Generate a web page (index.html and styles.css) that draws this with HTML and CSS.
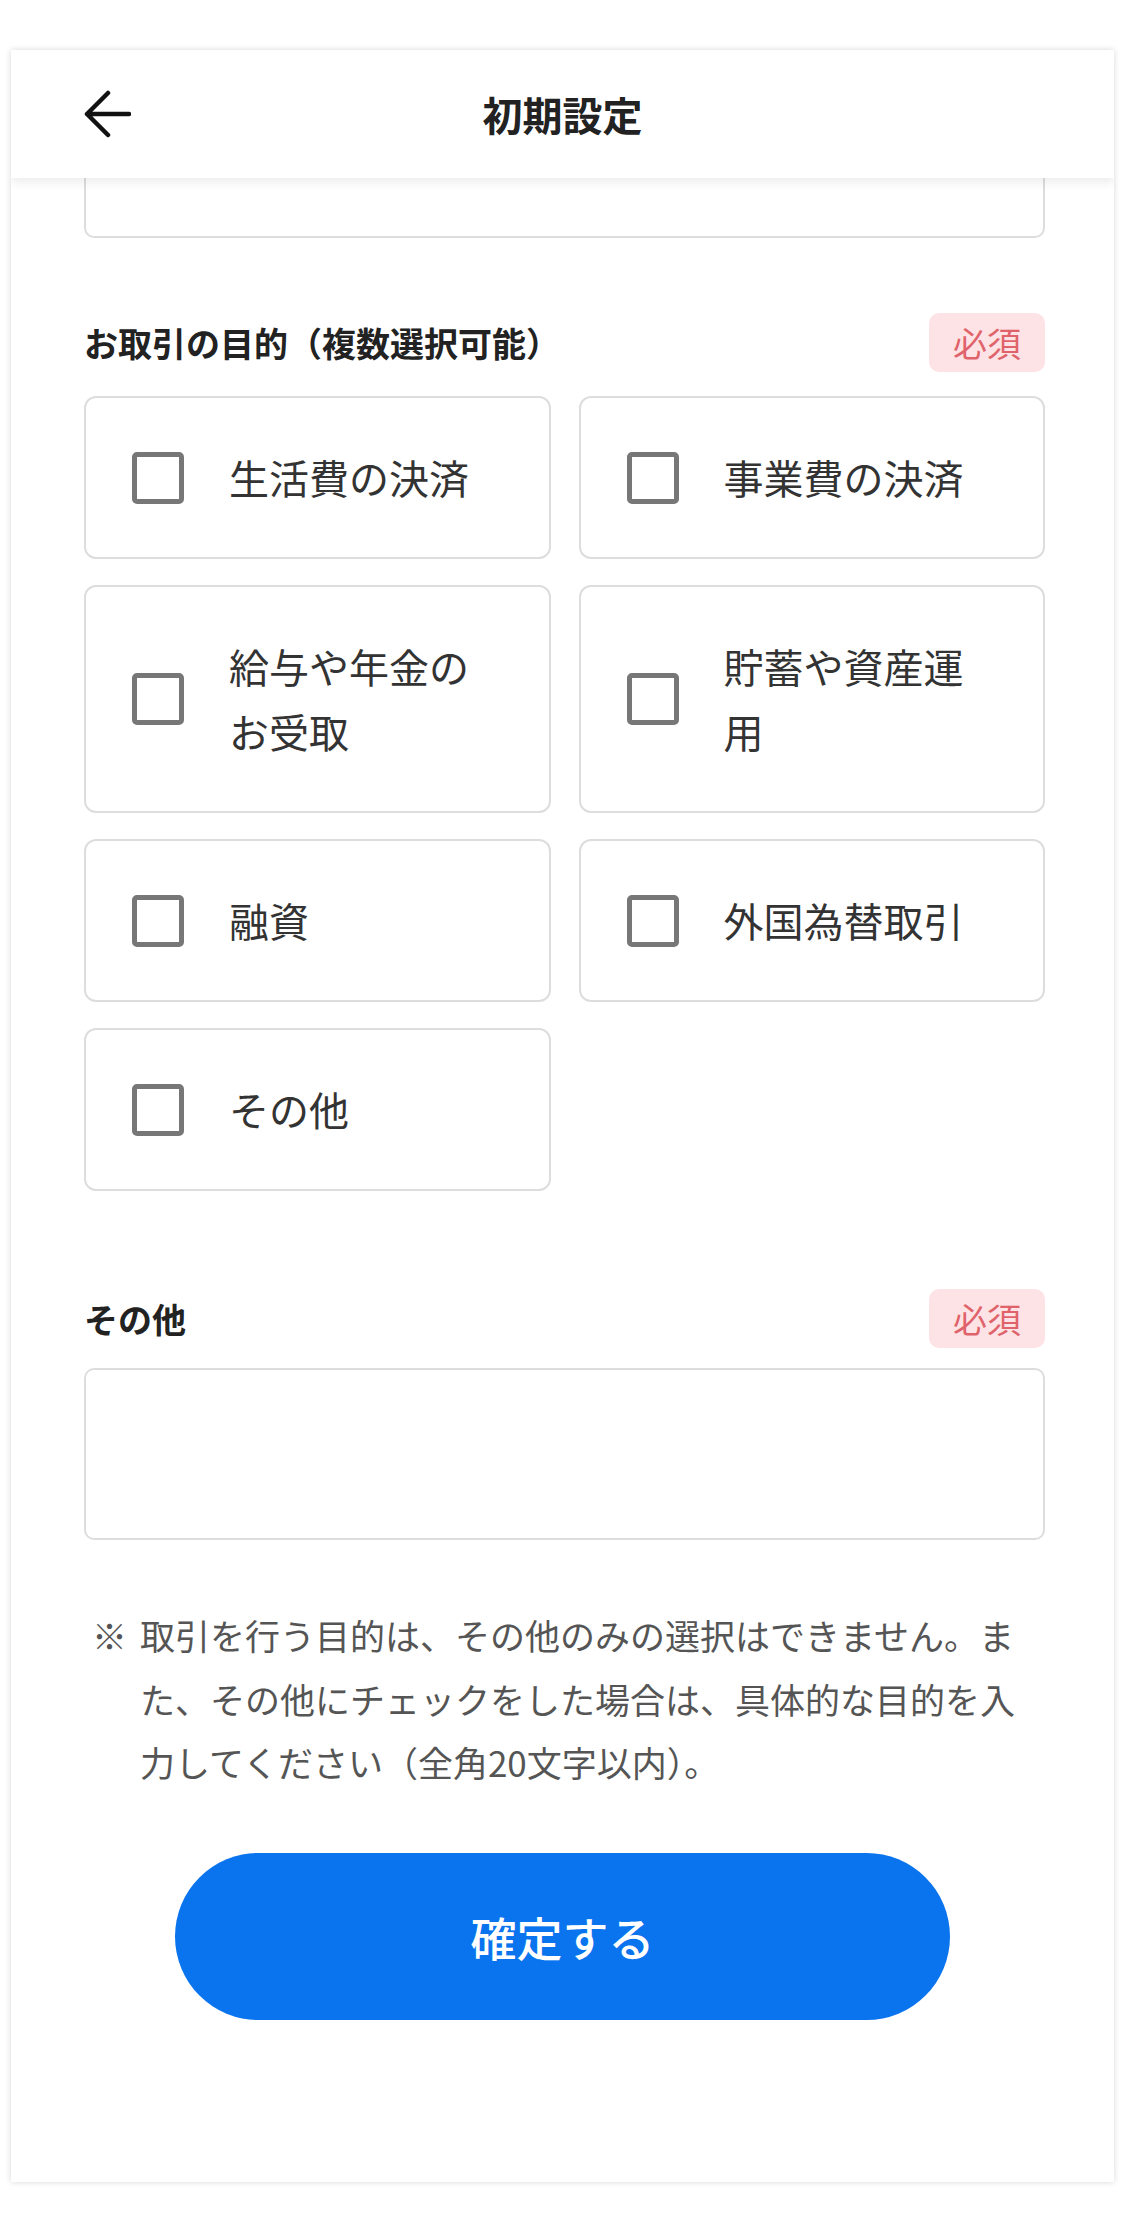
FILE: index.html
```html
<!DOCTYPE html>
<html lang="ja">
<head>
<meta charset="utf-8">
<title>初期設定</title>
<link rel="stylesheet" href="styles.css">
</head>
<body>
<div class="page">
  <div class="screen">
    <header class="topbar">
      <div class="back">
        <svg class="back-icon" viewBox="0 0 48 48" width="48" height="48" aria-hidden="true">
          <path d="M4 24 H46 M25 3 L4 24 L25 45" fill="none" stroke="#111" stroke-width="4.5" stroke-linecap="round" stroke-linejoin="round"/>
        </svg>
      </div>
      <h1 class="title">初期設定</h1>
      <div class="spacer"></div>
    </header>
    <main class="content">
      <div class="field field-cut"></div>

      <div class="label-row label-row-first">
        <span class="label">お取引の目的（複数選択可能）</span>
        <span class="badge">必須</span>
      </div>

      <div class="options">
        <label class="option"><span class="box"></span><span class="opt-text">生活費の決済</span></label>
        <label class="option"><span class="box"></span><span class="opt-text">事業費の決済</span></label>
        <label class="option"><span class="box"></span><span class="opt-text">給与や年金のお受取</span></label>
        <label class="option"><span class="box"></span><span class="opt-text">貯蓄や資産運用</span></label>
        <label class="option"><span class="box"></span><span class="opt-text">融資</span></label>
        <label class="option"><span class="box"></span><span class="opt-text">外国為替取引</span></label>
        <label class="option"><span class="box"></span><span class="opt-text">その他</span></label>
      </div>

      <div class="label-row label-row-second">
        <span class="label">その他</span>
        <span class="badge">必須</span>
      </div>
      <div class="field field-other"></div>

      <div class="note">
        <span class="mark">※</span>
        <span class="note-text">取引を行う目的は、その他のみの選択はできません。また、その他にチェックをした場合は、具体的な目的を入力してください（全角20文字以内）。</span>
      </div>

      <div class="actions">
        <button class="submit" type="button">確定する</button>
      </div>
    </main>
  </div>
</div>
</body>
</html>
```

FILE: styles.css
```css
* {
  box-sizing: border-box;
}

html, body {
  margin: 0;
  padding: 0;
  background: #ffffff;
}

body {
  font-family: "Noto Sans CJK JP", "Noto Sans", sans-serif;
  color: #333333;
}

.page {
  width: 1125px;
  height: 2230px;
  padding: 50px 11px 48px 11px;
}

.screen {
  width: 1103px;
  height: 2132px;
  background: #ffffff;
  box-shadow: 0 0 6px rgba(0, 0, 0, 0.16);
  display: flex;
  flex-direction: column;
  overflow: hidden;
}

.topbar {
  position: relative;
  z-index: 2;
  flex: none;
  height: 128px;
  background: #ffffff;
  display: grid;
  grid-template-columns: 1fr auto 1fr;
  align-items: center;
  padding: 0 0 0 72px;
  box-shadow: 0 5px 9px rgba(0, 0, 0, 0.07);
}

.back {
  display: flex;
  align-items: center;
}

.back-icon {
  display: block;
  width: 48px;
  height: 48px;
}

.title {
  margin: 0;
  font-size: 40px;
  font-weight: 700;
  color: #222222;
  line-height: 1;
  letter-spacing: 0;
  transform: translateX(-36px);
}

.content {
  flex: 1;
  overflow: hidden;
  padding: 0 69px 0 73px;
}

.field {
  border: 2px solid #dddddd;
  border-radius: 10px;
  background: #ffffff;
  height: 172px;
}

.field-cut {
  margin-top: -112px;
}

.label-row {
  display: flex;
  justify-content: space-between;
  align-items: center;
  height: 59px;
}

.label-row-first {
  margin-top: 75px;
}

.label-row-second {
  margin-top: 98px;
}

.label {
  font-size: 34px;
  font-weight: 700;
  color: #222222;
  line-height: 1;
}

.badge {
  display: inline-block;
  height: 59px;
  line-height: 59px;
  padding: 0 24px;
  font-size: 34px;
  color: #e0636b;
  background: #fde3e5;
  border-radius: 10px;
}

.options {
  margin-top: 24px;
  display: grid;
  grid-template-columns: 1fr 1fr;
  column-gap: 28px;
  row-gap: 26px;
}

.option {
  display: flex;
  align-items: center;
  padding: 47px 46px;
  border: 2px solid #dddddd;
  border-radius: 12px;
  background: #ffffff;
}

.box {
  flex: none;
  width: 52px;
  height: 52px;
  border: 5px solid #777777;
  border-radius: 5px;
  margin-right: 45px;
  background: #ffffff;
}

.opt-text {
  font-size: 40px;
  line-height: 65px;
  color: #333333;
}

.field-other {
  margin-top: 20px;
}

.note {
  margin-top: 63px;
  display: flex;
  padding-left: 8px;
  font-size: 35px;
  line-height: 63.5px;
  color: #555555;
}

.mark {
  flex: none;
  width: 48px;
}

.note-text {
  flex: 1;
}

.actions {
  margin-top: 59px;
  display: flex;
  justify-content: center;
  padding-right: 0;
}

.submit {
  width: 775px;
  height: 167px;
  border: none;
  border-radius: 84px;
  background: #0a73ee;
  color: #ffffff;
  font-family: "Noto Sans CJK JP", "Noto Sans", sans-serif;
  font-size: 46px;
  font-weight: 500;
  margin-left: -4px;
}
```
